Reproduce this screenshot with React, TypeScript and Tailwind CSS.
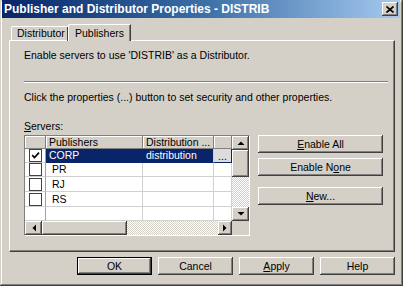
import React from "react";

const raised =
  "shadow-[inset_-1px_-1px_#404040,inset_1px_1px_#ffffff,inset_-2px_-2px_#808080,inset_2px_2px_#d4d0c8]";

function Btn({ children, className = "" }: { children?: React.ReactNode; className?: string }) {
  return (
    <div className={`flex items-center justify-center bg-[#d4d0c8] text-black ${raised} ${className}`}>
      {children}
    </div>
  );
}

function Arrow({ dir }: { dir: "up" | "down" | "left" | "right" }) {
  const pts =
    dir === "up"
      ? "0.5,6 7.5,6 4,2.5"
      : dir === "down"
      ? "0.5,2 7.5,2 4,5.5"
      : dir === "left"
      ? "6,0.5 6,7.5 2.5,4"
      : "2,0.5 2,7.5 5.5,4";
  return (
    <svg width="8" height="8" viewBox="0 0 8 8">
      <polygon points={pts} fill="#000" />
    </svg>
  );
}

function Check({ checked }: { checked?: boolean }) {
  return (
    <div className="w-[13px] h-[13px] bg-white border border-[#404040] flex items-center justify-center">
      {checked && (
        <svg width="9" height="9" viewBox="0 0 9 9">
          <polyline points="1.2,4.2 3.5,6.6 8,1.6" fill="none" stroke="#000" strokeWidth="1.7" />
        </svg>
      )}
    </div>
  );
}

const dither =
  "bg-[repeating-conic-gradient(#ffffff_0%_25%,#d4d0c8_0%_50%)] bg-[length:2px_2px]";

function Row({
  name,
  dist,
  checked,
  selected,
  h,
}: {
  name: string;
  dist?: string;
  checked?: boolean;
  selected?: boolean;
  h: string;
}) {
  return (
    <div className={`flex ${h}`}>
      <div className="w-[21px] bg-white border-r border-b border-r-[#a0a0a0] border-b-[#d0d0d0] flex items-center justify-center">
        {name && <Check checked={checked} />}
      </div>
      <div
        className={`w-[97px] border-r border-b border-[#d0d0d0] flex items-center ${
          selected ? "bg-[#0a246a] text-white pl-[3px] border-b-[#0a246a] border-r-[#0a246a]" : "bg-white text-black pl-[6px]"
        }`}
      >
        {name}
      </div>
      <div
        className={`w-[71px] border-r border-b border-[#d0d0d0] flex items-center pl-[3px] ${
          selected ? "bg-[#0a246a] text-white border-b-[#0a246a]" : "bg-white"
        }`}
      >
        {dist}
      </div>
      <div
        className={`w-[18px] border-r border-b border-[#d0d0d0] flex items-end justify-center ${
          selected ? "bg-[#dcdcdc] border-b-[#0a246a] border-r-[#0a246a]" : "bg-white"
        }`}
      >
        {selected && <span className="leading-[10px] pb-[1px]">...</span>}
      </div>
    </div>
  );
}

export default function App() {
  return (
    <div
      className="w-[405px] h-[288px] bg-white overflow-hidden text-[10.5px] leading-[13px] text-black"
      style={{ fontFamily: '"Liberation Sans", Arial, sans-serif' }}
    >
      <div className="w-[403px] h-[286px] bg-[#d4d0c8] flex flex-col shadow-[inset_-1px_-1px_#404040,inset_1px_1px_#d4d0c8,inset_-2px_-2px_#808080,inset_2px_2px_#ffffff]">
        {/* Title bar */}
        <div className="ml-[2px] mr-[3px] h-[18px] flex items-center justify-between bg-linear-to-r from-[#0a246a] via-[#3a6ea5] to-[#a6caf0]">
          <span className="pl-[2px] text-white font-bold text-[12px] leading-[14px]">
            Publisher and Distributor Properties - DISTRIB
          </span>
          <Btn className="w-[16px] h-[14px] mr-[2px]">
            <svg width="8" height="7" viewBox="0 0 8 7">
              <path d="M0.5 0.5 L7.5 6.5 M7.5 0.5 L0.5 6.5" stroke="#000" strokeWidth="1.7" />
            </svg>
          </Btn>
        </div>

        {/* Tabs */}
        <div className="mt-[6px] ml-[9px] h-[16px] flex items-end relative z-10">
          <div className="ml-[2px] w-[57px] h-[14px] border-l border-t border-[#ffffff] rounded-tl-[2px] flex items-center pl-[5px] shadow-[inset_-1px_0_#808080]">
            <span className="border-r border-[#404040] pr-[4px] -mr-[1px] h-[14px] flex items-center w-full">
              Distributor
            </span>
          </div>
          <div className="w-[63px] h-[17px] -mb-[1px] bg-[#d4d0c8] border-l border-t border-[#ffffff] rounded-tl-[2px] border-r border-r-[#404040] shadow-[inset_-1px_0_#808080] flex items-start pt-[2px] pl-[6px]">
            Publishers
          </div>
        </div>

        {/* Panel */}
        <div className="ml-[9px] w-[386px] h-[212px] border-l border-t border-[#ffffff] border-r-[#404040] border-b-[#404040] border-r border-b shadow-[inset_-1px_-1px_#808080] flex flex-col pl-[14px]">
          <div className="mt-[8px] h-[13px]">Enable servers to use &apos;DISTRIB&apos; as a Distributor.</div>
          <div className="mt-[19px] w-[364px] h-[2px] border-t border-b border-t-[#808080] border-b-[#ffffff]" />
          <div className="mt-[8px] h-[13px]">
            Click the properties (...) button to set security and other properties.
          </div>
          <div className="mt-[16px] h-[13px]">
            <span className="underline">S</span>ervers:
          </div>

          <div className="mt-[2px] flex">
            {/* Grid */}
            <div className="w-[226px] h-[101px] border border-t-[#808080] border-l-[#808080] border-r-[#ffffff] border-b-[#ffffff] bg-white flex flex-col">
              <div className="flex h-[85px]">
                <div className="w-[207px] flex flex-col">
                  <div className="flex h-[13px] bg-[#d4d0c8]">
                    <div className="w-[21px] border-r border-b border-[#808080] shadow-[inset_1px_1px_#ffffff]" />
                    <div className="w-[97px] border-r border-b border-[#808080] pl-[3px] shadow-[inset_1px_1px_#ffffff] leading-[12px]">
                      Publishers
                    </div>
                    <div className="w-[71px] border-r border-b border-[#808080] pl-[3px] shadow-[inset_1px_1px_#ffffff] leading-[12px] whitespace-nowrap overflow-hidden">
                      Distribution ...
                    </div>
                    <div className="w-[18px] border-r border-b border-[#808080] shadow-[inset_1px_1px_#ffffff]" />
                  </div>
                  <Row name="CORP" dist="distribution" checked selected h="h-[14px]" />
                  <Row name="PR" h="h-[14px]" />
                  <Row name="RJ" h="h-[15px]" />
                  <Row name="RS" h="h-[15px]" />
                  <Row name="" h="h-[14px]" />
                </div>
                <div className="w-[17px] flex flex-col">
                  <Btn className="h-[14px]">
                    <Arrow dir="up" />
                  </Btn>
                  <Btn className="h-[27px]" />
                  <div className={`flex-1 ${dither}`} />
                  <Btn className="h-[14px]">
                    <Arrow dir="down" />
                  </Btn>
                </div>
              </div>
              <div className="flex h-[14px]">
                <Btn className="w-[17px]">
                  <Arrow dir="left" />
                </Btn>
                <Btn className="w-[85px]" />
                <div className={`flex-1 ${dither}`} />
                <Btn className="w-[14px]">
                  <Arrow dir="right" />
                </Btn>
                <div className="w-[17px] bg-[#d4d0c8]" />
              </div>
            </div>

            {/* Right buttons */}
            <div className="ml-[8px] w-[125px] flex flex-col">
              <Btn className="h-[18px]">
                <span>
                  <span className="underline">E</span>nable All
                </span>
              </Btn>
              <Btn className="h-[18px] mt-[5px]">
                <span>
                  Enable N<span className="underline">o</span>ne
                </span>
              </Btn>
              <Btn className="h-[18px] mt-[11px]">
                <span>
                  <span className="underline">N</span>ew...
                </span>
              </Btn>
            </div>
          </div>
        </div>

        {/* Bottom buttons */}
        <div className="mt-[5px] ml-[77px] flex gap-[6px]">
          <div className="w-[75px] h-[18px] border border-black">
            <Btn className="w-full h-full">OK</Btn>
          </div>
          <Btn className="w-[75px] h-[18px]">Cancel</Btn>
          <Btn className="w-[75px] h-[18px]">
            <span>
              <span className="underline">A</span>pply
            </span>
          </Btn>
          <Btn className="w-[75px] h-[18px]">Help</Btn>
        </div>
      </div>
    </div>
  );
}
